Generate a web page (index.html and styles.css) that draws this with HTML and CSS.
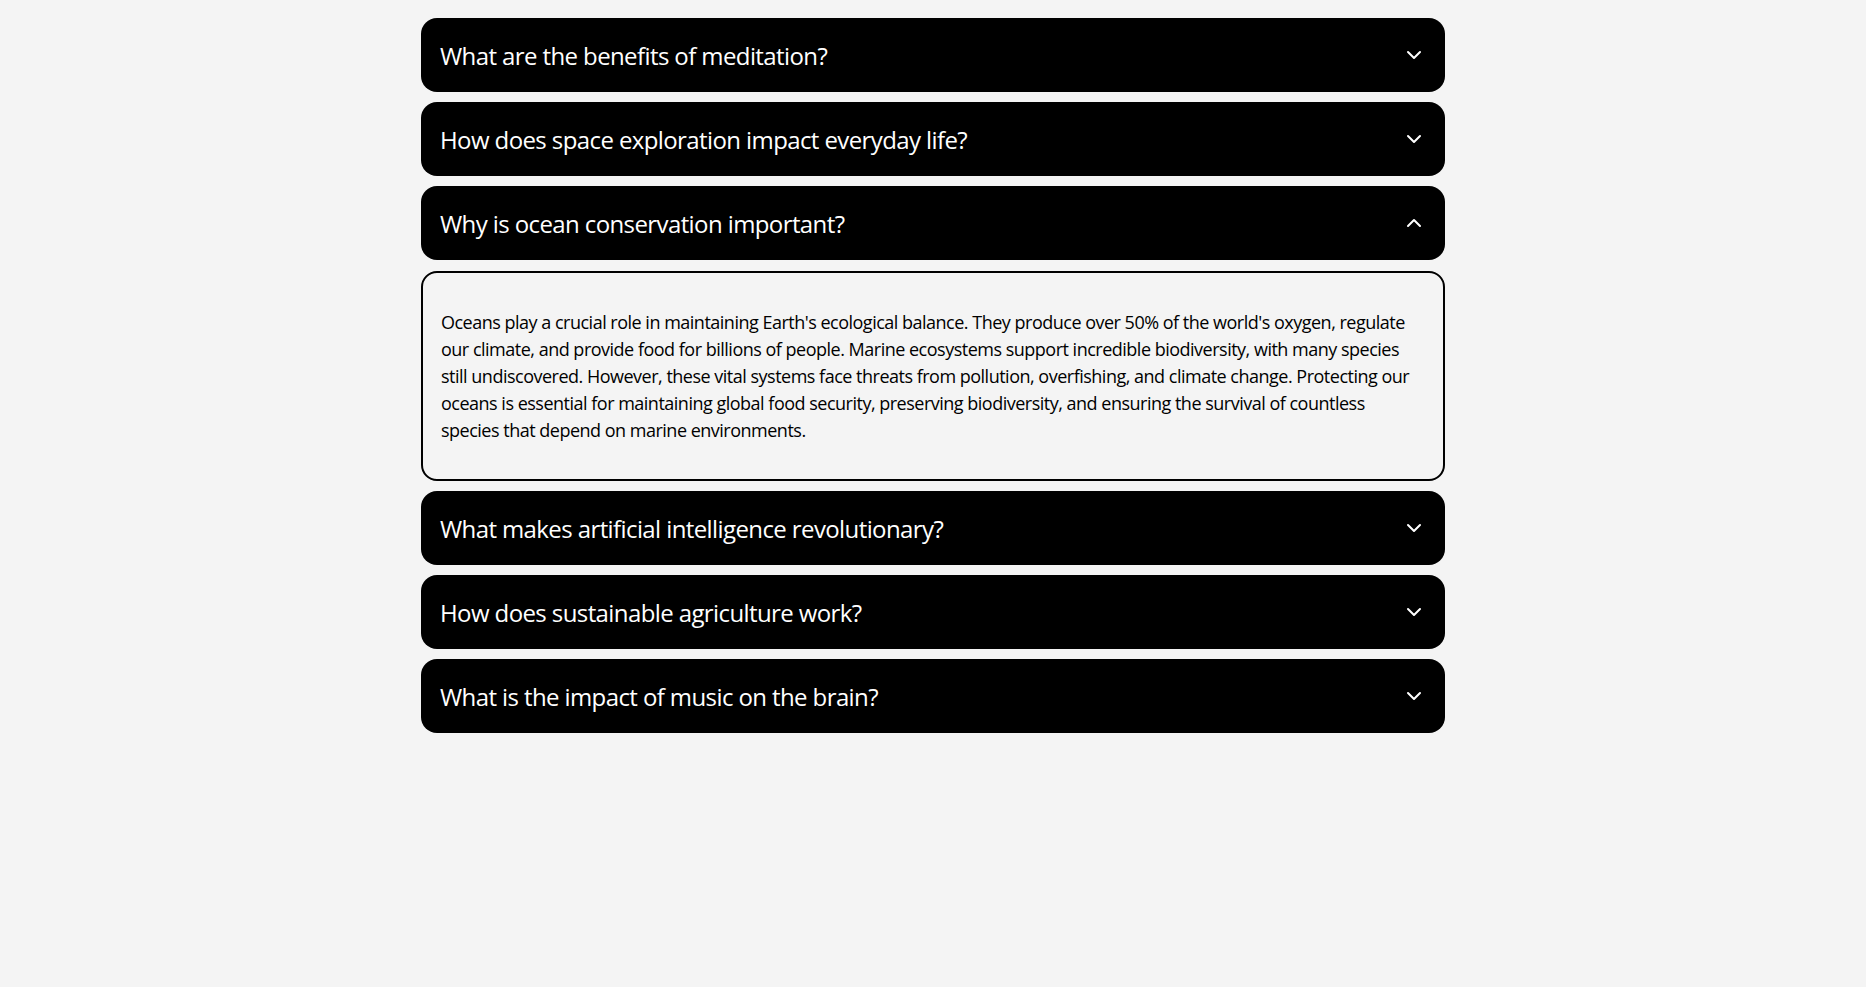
FILE: index.html
```html
<!DOCTYPE html>
<html lang="en">
<head>
<meta charset="utf-8">
<title>FAQ</title>
<link rel="stylesheet" href="styles.css">
</head>
<body>
<main class="faq">
  <div class="item">
    <button class="question"><span>What are the benefits of meditation?</span>
      <svg class="chev" viewBox="0 0 24 24"><path d="m6 9 6 6 6-6"/></svg></button>
  </div>
  <div class="item">
    <button class="question"><span>How does space exploration impact everyday life?</span>
      <svg class="chev" viewBox="0 0 24 24"><path d="m6 9 6 6 6-6"/></svg></button>
  </div>
  <div class="item open">
    <button class="question"><span>Why is ocean conservation important?</span>
      <svg class="chev" viewBox="0 0 24 24"><path d="m18 15-6-6-6 6"/></svg></button>
    <div class="answer">
      <p>Oceans play a crucial role in maintaining Earth's ecological balance. They produce over 50% of the world's oxygen, regulate our climate, and provide food for billions of people. Marine ecosystems support incredible biodiversity, with many species still undiscovered. However, these vital systems face threats from pollution, overfishing, and climate change. Protecting our oceans is essential for maintaining global food security, preserving biodiversity, and ensuring the survival of countless species that depend on marine environments.</p>
    </div>
  </div>
  <div class="item">
    <button class="question"><span>What makes artificial intelligence revolutionary?</span>
      <svg class="chev" viewBox="0 0 24 24"><path d="m6 9 6 6 6-6"/></svg></button>
  </div>
  <div class="item">
    <button class="question"><span>How does sustainable agriculture work?</span>
      <svg class="chev" viewBox="0 0 24 24"><path d="m6 9 6 6 6-6"/></svg></button>
  </div>
  <div class="item">
    <button class="question"><span>What is the impact of music on the brain?</span>
      <svg class="chev" viewBox="0 0 24 24"><path d="m6 9 6 6 6-6"/></svg></button>
  </div>
</main>
</body>
</html>
```

FILE: styles.css
```css
* { box-sizing: border-box; }
html, body { margin: 0; padding: 0; }
body {
  background: #f4f4f4;
  font-family: "Open Sans", "Noto Sans", sans-serif;
  color: #000;
}
.faq {
  max-width: 1024px;
  margin: 18px auto 0;
  display: flex;
  flex-direction: column;
  gap: 10px;
}
.item {
  display: flex;
  flex-direction: column;
  gap: 11px;
}
.question {
  display: flex;
  align-items: center;
  justify-content: space-between;
  width: 100%;
  height: 74px;
  padding: 0 19px 0 19px;
  background: #000;
  color: #fff;
  border: none;
  border-radius: 16px;
  font-family: inherit;
  font-size: 24px;
  letter-spacing: -0.6px;
  text-align: left;
  cursor: pointer;
}
.chev {
  width: 24px;
  height: 24px;
  fill: none;
  stroke: #fff;
  stroke-width: 2;
  stroke-linecap: round;
  stroke-linejoin: round;
  flex: none;
}
.answer {
  border: 2px solid #000;
  border-radius: 16px;
  padding: 36px 18px 35px;
}
.answer p {
  margin: 0;
  font-size: 18px;
  line-height: 27px;
  letter-spacing: -0.5px;
}
```
